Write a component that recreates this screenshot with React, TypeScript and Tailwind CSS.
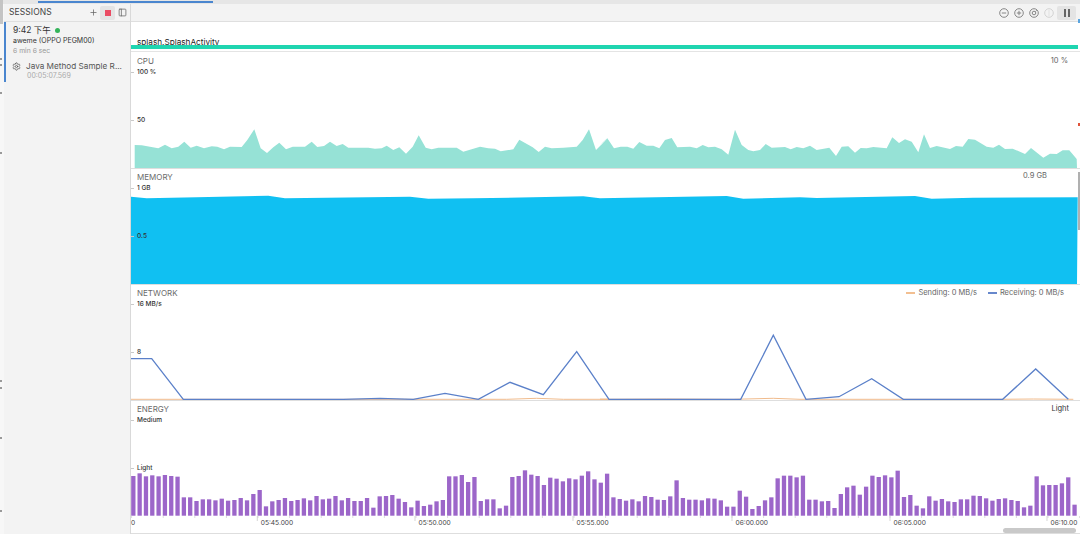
import React from "react";
import {Settings, Plus, PanelLeft} from "lucide-react";

// chart points are [x, y] read off 3x crops, converted back to page px below
const cpuA = [[14,255],[35,256],[60,260],[85,265],[105,254],[125,265],[145,260],[163,245],[182,263],[200,257],[222,265],[245,259],[262,260],[282,268],[300,260],[335,261],[352,240],[373,208],[392,265],[411,279],[430,262],[448,248],[468,268],[488,260],[525,260],[545,245],[562,261],[582,258],[600,245],[620,258],[638,252],[655,263],[715,263],[735,266],[755,265],[770,257],[790,270],[808,262],[828,281],[848,260],[866,226],[887,263],[905,268],[925,263],[980,263],[1000,275],[1050,260],[1075,265],[1095,266],[1112,274],[1150,268],[1168,239],[1208,262],[1226,276],[1245,260],[1265,265],[1300,263],[1340,260],[1358,240],[1377,208],[1398,270],[1420,248],[1435,235]];
const cpuB = [[0,255],[22,235],[42,265],[62,260],[82,260],[100,266],[118,246],[140,257],[160,257],[178,265],[195,240],[215,234],[232,262],[270,260],[290,265],[308,255],[325,262],[345,260],[365,268],[385,284],[405,209],[425,255],[445,270],[460,274],[480,270],[497,252],[515,263],[555,261],[572,268],[590,261],[610,265],[630,257],[650,270],[688,263],[708,288],[725,260],[745,259],[765,278],[782,264],[800,265],[820,261],[860,265],[877,232],[897,249],[915,238],[935,245],[955,277],[972,223],[990,264],[1010,258],[1050,267],[1068,258],[1088,260],[1105,237],[1125,239],[1160,260],[1180,263],[1197,254],[1215,267],[1238,266],[1275,282],[1293,264],[1330,293],[1350,281],[1370,282],[1388,271],[1408,271],[1430,297]];
const memA = [[3,95],[50,100],[200,97],[415,92],[465,100],[840,95],[895,101],[1030,100],[1360,94],[1410,100]];
const memB = [[0,100],[380,93],[430,101],[600,97],[650,99],[945,93],[995,101],[1120,98],[1433,97]];
const netA = [[0,236],[65,236],[160,358],[640,358],[750,355],[850,358],[945,340],[1045,358],[1140,307],[1240,344],[1340,215],[1437,358]];
const netB = [[27,358],[422,358],[520,166],[618,358],[717,350],[815,296],[910,358],[1208,358],[1307,267],[1405,358]];
const sendA = [[0,358],[1130,358],[1220,355],[1300,358],[1437,358]];
const sendB = [[0,358],[200,357],[400,358],[520,355],[600,358],[1200,358],[1300,357],[1420,358]];
const energy = [228,220,229,226,229,225,228,230,292,292,303,298,298,301,296,302,300,294,301,282,270,319,304,300,294,303,300,295,301,288,298,296,288,301,294,303,303,294,323,289,288,285,296,306,322,302,318,314,304,300,229,229,225,246,231,303,298,298,325,317,231,228,211,224,228,255,233,236,244,235,238,227,214,238,248,221,292,297,302,298,304,288,291,299,300,289,241,294,299,299,301,295,296,301,320,320,272,290,327,318,301,292,235,227,227,232,227,299,299,304,303,324,282,262,257,284,260,227,231,226,232,212,291,285,317,325,289,302,297,304,306,298,298,287,288,295,302,297,295,300,303,322,317,229,256,255,255,250,232,314];
const majorTicks = [
  {x: 257.3, label: "05:45.000"},
  {x: 415, label: "05:50.000"},
  {x: 573, label: "05:55.000"},
  {x: 732, label: "06:00.000"},
  {x: 890, label: "06:05.000"},
  {x: 1047, label: "06:10.00"},
];
const specks = [58, 64, 92, 152, 380, 387, 437, 510];

const toPage = (pts: number[][], ox: number, oy: number) => pts.map(([x, y]) => [x / 3 + ox, y / 3 + oy]);
const line = (pts: number[][]) => pts.map(([x, y]) => `${x.toFixed(1)},${y.toFixed(1)}`).join(" ");

function AxisLabel(props: {top: number, children: React.ReactNode}) {
  return <div className="absolute left-0 flex items-center h-[10px]" style={{top: props.top}}>
    <span className="w-[3px] h-px bg-[#c9c9c9]"/>
    <span className="ml-[3px] text-[6.5px] leading-[10px] font-medium text-[#333]">{props.children}</span>
  </div>
}

function Monitor(props: {
  title: string,
  titleTop: number,
  height: number,
  top: number,
  ticks: { top: number, label: string }[],
  right?: React.ReactNode,
  children: React.ReactNode,
}) {
  return <section className="relative shrink-0 border-b border-[#dedede]" style={{height: props.height}}>
    <svg className="block absolute left-0 top-0" width={948} height={props.height - 1}
         viewBox={`131 ${props.top} 948 ${props.height - 1}`}>
      {props.children}
    </svg>
    <div className="absolute left-[6px] h-[10px] text-[8px] leading-[10px] text-[#6b6b6b]" style={{top: props.titleTop}}>{props.title}</div>
    {props.ticks.map(t => <AxisLabel key={t.label} top={t.top}>{t.label}</AxisLabel>)}
    {props.right}
  </section>
}

function RoundIcon(props: {children: React.ReactNode, faint?: boolean}) {
  return <svg width="10" height="10" viewBox="0 0 10 10" fill="none" stroke={props.faint ? "#cfcfcf" : "#7a7a7a"} strokeWidth="0.9">
    <circle cx="5" cy="5" r="4.3"/>
    {props.children}
  </svg>
}

export default function App() {
  const cpu = [...toPage(cpuA, 130, 60), ...toPage(cpuB, 600, 60)];
  const mem = [...toPage(memA, 130, 165), ...toPage(memB, 600, 165)];
  const net = [...toPage(netA, 130, 280), ...toPage(netB, 600, 280)];
  const send = [...toPage(sendA, 130, 280), ...toPage(sendB, 600, 280)];

  return <div className="w-[1080px] h-[534px] overflow-hidden bg-white flex flex-col relative font-['Inter',sans-serif]">
    <div className="h-[4px] shrink-0 bg-[#e6e6e6] flex">
      <div className="ml-[38px] w-[175px] h-[2px] mt-px bg-[#4a86cf]"/>
    </div>
    <div className="flex-1 flex min-h-0">
      <aside className="w-[131px] shrink-0 bg-[#f3f3f3] border-r border-[#d9d9d9] flex">
        <div className="w-[4px] shrink-0 bg-[#f7f7f7] relative">
          <div className="absolute left-0 top-[-4px] w-[3px] h-[24px] bg-[#c4c4c4]"/>
          {specks.map(y => <div key={y} className="absolute left-0 w-[2px] h-[2px] bg-[#999]" style={{top: y - 4}}/>)}
        </div>
        <div className="flex-1 flex flex-col min-w-0">
          <div className="h-[18px] shrink-0 flex items-center border-b border-[#dfdfdf] pl-[5px]">
            <span className="w-[85px] shrink-0 text-[8.5px] tracking-[0.1px] text-[#444]">SESSIONS</span>
            <Plus className="-ml-[5px] text-[#666]" size={9} strokeWidth={2}/>
            <div className="ml-[2px] w-[15px] h-[14px] bg-[#e4e4e4] rounded-[2px] flex items-center justify-center">
              <div className="w-[6px] h-[6px] bg-[#ea4b63]"/>
            </div>
            <PanelLeft className="ml-[3px] text-[#666]" size={9} strokeWidth={2}/>
          </div>
          <div className="border-l-2 border-[#4a86cf] h-[60px] pl-[7px] pt-[3px]">
            <div className="flex items-center h-[10px]">
              <span className="text-[8.5px] leading-[10px] text-[#333] font-['Inter','Noto_Sans_CJK_SC',sans-serif]">9:42 下午</span>
              <span className="ml-[4px] w-[5px] h-[5px] rounded-full bg-[#34b35a]"/>
            </div>
            <div className="mt-px text-[7px] leading-[10px] text-[#333]">aweme (OPPO PEGM00)</div>
            <div className="text-[6.8px] leading-[10px] text-[#999]">6 min 6 sec</div>
            <div className="flex items-center mt-[5px] h-[10px]">
              <Settings className="-ml-[1px] shrink-0 text-[#555]" size={9} strokeWidth={2}/>
              <span className="ml-[5px] text-[8.2px] leading-[10px] text-[#555] whitespace-nowrap">Java Method Sample R...</span>
            </div>
            <div className="ml-[14px] text-[7px] leading-[10px] text-[#aaa]">00:05:07.569</div>
          </div>
        </div>
      </aside>
      <main className="flex-1 min-w-0 flex flex-col">
        <div className="h-[18px] shrink-0 bg-[#f3f3f3] border-b border-[#dfdfdf] flex items-center justify-end pr-[4px] gap-[5px]">
          <RoundIcon><path d="M2.8 5h4.4"/></RoundIcon>
          <RoundIcon><path d="M2.8 5h4.4M5 2.8v4.4"/></RoundIcon>
          <RoundIcon><circle cx="5" cy="5" r="1.8"/><path d="M6.5 3.5l1.2-1.2"/></RoundIcon>
          <RoundIcon faint><path d="M5 2.5v1M5 4.5v1M5 6.5v1"/></RoundIcon>
          <div className="-ml-[2px] w-[19px] h-[14px] bg-[#e4e4e4] rounded-[2px] flex items-center justify-center gap-[2px]">
            <span className="w-[2px] h-[8px] bg-[#666]"/>
            <span className="w-[2px] h-[8px] bg-[#666]"/>
          </div>
        </div>
        <div className="h-[30px] shrink-0 relative border-b border-[#e4e4e4]">
          <div className="absolute left-[6px] top-[14px] text-[8.2px] leading-[12px] text-[#222]">splash.SplashActivity</div>
          <div className="absolute left-0 right-[2px] top-[23px] h-[4px] bg-[#1fd5b0]"/>
        </div>

        <Monitor title="CPU" titleTop={4} height={117} top={52}
                 ticks={[{top: 15, label: "100 %"}, {top: 63, label: "50"}]}
                 right={<div className="absolute right-[12px] top-[4px] text-[7.5px] leading-[10px] text-[#666]">10 %</div>}>
          <polygon fill="#96e2d6" points={`134.7,168 ${line(cpu)} 1077,168`}/>
        </Monitor>

        <Monitor title="MEMORY" titleTop={3} height={116} top={169}
                 ticks={[{top: 14, label: "1 GB"}, {top: 62, label: "0.5"}]}
                 right={<div className="absolute right-[33px] top-[2px] text-[7.5px] leading-[10px] text-[#666]">0.9 GB</div>}>
          <polygon fill="#10c0f2" points={`131,284 ${line(mem)} 1077,284`}/>
        </Monitor>

        <Monitor title="NETWORK" titleTop={3} height={116} top={285}
                 ticks={[{top: 14, label: "16 MB/s"}, {top: 62, label: "8"}]}
                 right={<div className="absolute right-[16px] top-[3px] flex items-center text-[7.5px] leading-[10px] text-[#666]">
                   <span className="w-[9px] h-[2px] bg-[#f2bf91] mr-[3px]"/>
                   <span>Sending: 0 MB/s</span>
                   <span className="ml-[11px] w-[9px] h-[2px] bg-[#6788cc] mr-[3px]"/>
                   <span>Receiving: 0 MB/s</span>
                 </div>}>
          <polyline fill="none" stroke="#f0bb8c" strokeWidth="1" points={line(send)}/>
          <polyline fill="none" stroke="#5b80c9" strokeWidth="1.3" points={line(net)}/>
        </Monitor>

        <section className="relative flex-1 min-h-0 border-b border-[#dedede]">
          <svg className="block absolute left-0 top-0" width={949} height={132} viewBox="131 401 949 132">
            {energy.map((top, i) => {
              const x = 130 + 10 / 3 + i * 6.317;
              const y = 400 + top / 3;
              return <rect key={i} x={x - 2.15} y={y} width={4.3} height={515.7 - y} fill="#9c66c9"/>
            })}
            {Array.from({length: 31}, (_, i) => 131.6 + i * 31.6).map(x =>
              <line key={x} x1={x} x2={x} y1={516} y2={518} stroke="#cfcfcf" strokeWidth="0.7"/>)}
            {majorTicks.map(t => <line key={t.x} x1={t.x} x2={t.x} y1={516} y2={521} stroke="#c4c4c4" strokeWidth="0.7"/>)}
          </svg>
          <div className="absolute left-[6px] top-[3px] h-[10px] text-[8px] leading-[10px] text-[#6b6b6b]">ENERGY</div>
          <AxisLabel top={14}>Medium</AxisLabel>
          <AxisLabel top={62}>Light</AxisLabel>
          <div className="absolute right-[11px] top-[3px] text-[7.5px] leading-[10px] text-[#333]">Light</div>
          <div className="absolute left-0 top-[117px] text-[6.6px] leading-[10px] text-[#444]">0</div>
          {majorTicks.map(t => <div key={t.label} className="absolute top-[117px] text-[6.6px] leading-[10px] text-[#444] whitespace-nowrap" style={{left: t.x - 131 + 3.5}}>{t.label}</div>)}
          <div className="absolute right-[4px] top-[127px] w-[73px] h-[5px] rounded-full bg-[#c9c9c9]"/>
        </section>
      </main>
    </div>
    <div className="absolute right-0 top-[172px] w-[2px] h-[58px] bg-[#b0b0b0]"/>
    <div className="absolute right-0 top-[123px] w-[2px] h-[3px] bg-[#e0533a]"/>
    <div className="absolute right-0 top-[19px] w-[2px] h-[4px] bg-[#5aa5e0]"/>
  </div>
}
